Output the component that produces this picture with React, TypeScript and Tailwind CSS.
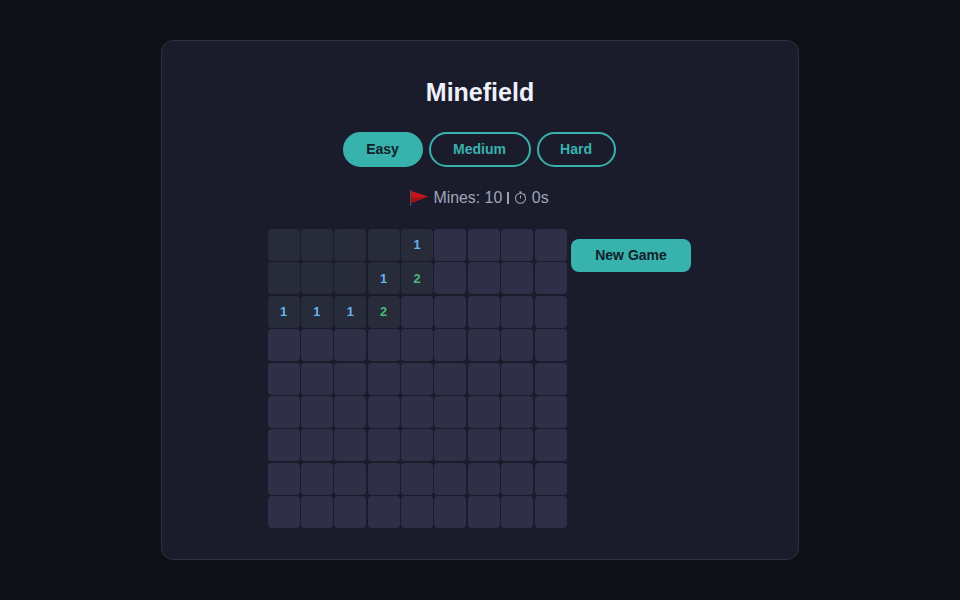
const revealed: Record<string, { n?: number }> = {
  "0-0": {}, "0-1": {}, "0-2": {}, "0-3": {}, "0-4": { n: 1 },
  "1-0": {}, "1-1": {}, "1-2": {}, "1-3": { n: 1 }, "1-4": { n: 2 },
  "2-0": { n: 1 }, "2-1": { n: 1 }, "2-2": { n: 1 }, "2-3": { n: 2 },
};

const levels = ["Easy", "Medium", "Hard"];

function Cell({ id }: { id: string }) {
  const cell = revealed[id];
  return (
    <div
      className={`flex h-[32px] items-center justify-center rounded-[4px] text-[12.8px] font-bold ${
        cell ? "bg-[#282b3a]" : "bg-[#2f3047]"
      } ${cell?.n === 1 ? "text-[#63b3ed]" : "text-[#48bb78]"}`}
    >
      {cell?.n}
    </div>
  );
}

export default function App() {
  const cells = [];
  for (let r = 0; r < 9; r++) {
    for (let c = 0; c < 9; c++) {
      cells.push(`${r}-${c}`);
    }
  }

  return (
    <div className="flex h-[600px] w-[960px] items-center justify-center bg-[#0f1018] font-['Liberation_Sans',sans-serif]">
      <div className="flex h-[520px] w-[638px] flex-col items-center rounded-[12px] border border-[#2e3040] bg-[#1a1c2c] pt-[32px]">
        <h1 className="text-[25px] leading-[38px] font-bold text-[#eef0fa]">Minefield</h1>

        <div className="mt-[21px] mr-[2px] flex gap-[6px]">
          {levels.map((level, i) => (
            <button
              key={level}
              className={`h-[35px] rounded-full border-2 border-[#38b2ac] text-[14px] font-bold ${
                i === 0 ? "w-[80px] bg-[#38b2ac] text-[#12202a]" : "bg-transparent text-[#38b2ac]"
              } ${i === 1 ? "w-[102px]" : ""} ${i === 2 ? "w-[79px]" : ""}`}
            >
              {level}
            </button>
          ))}
        </div>

        <div className="mt-[21px] mr-[2px] flex h-[19px] items-center text-[15.9px] text-[#a0a4b8]">
          <svg width="20" height="18" viewBox="0 0 20 18" className="mr-[4px]">
            <rect x="1" y="1" width="1.2" height="16" fill="#4a4d5a" />
            <path d="M2.2 2 L19 7.5 L2.2 14 Z" fill="#c8171c" />
            <path d="M2.2 9 L19 7.5 L2.2 14 Z" fill="#a01216" />
          </svg>
          <span>Mines: 10</span>
          <span className="ml-[5px] h-[12px] w-[1.5px] bg-[#a0a4b8]" />
          <svg width="13" height="13" viewBox="0 0 14 14" fill="none" stroke="#a0a4b8" strokeWidth="1.1" className="mx-[5px]">
            <circle cx="7" cy="7.8" r="5.4" />
            <path d="M5.5 1 H8.5 M7 1 V2.4 M7 8 V4.8 M11 3.2 L11.9 4.1" />
          </svg>
          <span>0s</span>
        </div>

        <div className="mt-[22px] mr-[1.5px] flex items-start gap-[4.5px]">
          <div className="grid w-[299px] grid-cols-[repeat(9,32px)] gap-[1.375px]">
            {cells.map((id) => (
              <Cell key={id} id={id} />
            ))}
          </div>
          <button className="mt-[10px] h-[33px] w-[120px] rounded-[8px] bg-[#38b2ac] text-[14px] font-bold text-[#12202a]">
            New Game
          </button>
        </div>
      </div>
    </div>
  );
}
